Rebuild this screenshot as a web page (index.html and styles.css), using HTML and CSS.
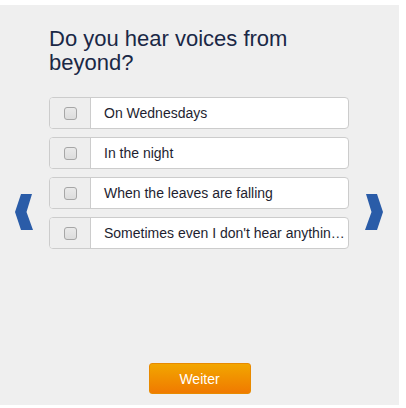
FILE: index.html
```html
<!DOCTYPE html>
<html lang="de">
<head>
<meta charset="utf-8">
<title>Survey</title>
<link rel="stylesheet" href="styles.css">
</head>
<body>
<div class="panel">
  <div class="stage">
    <button class="arrow" aria-label="Zurück">
      <svg width="18" height="36" viewBox="0 0 18 36"><polygon points="17,0 6,0 0,18 6,36 18,36 11.5,18" fill="#2a5ca8"/></svg>
    </button>
    <div class="content">
      <h3 class="question">Do you hear voices from beyond?</h3>
      <div class="option">
        <span class="addon"><span class="check"></span></span>
        <span class="label">On Wednesdays</span>
      </div>
      <div class="option">
        <span class="addon"><span class="check"></span></span>
        <span class="label">In the night</span>
      </div>
      <div class="option">
        <span class="addon"><span class="check"></span></span>
        <span class="label">When the leaves are falling</span>
      </div>
      <div class="option">
        <span class="addon"><span class="check"></span></span>
        <span class="label">Sometimes even I don't hear anything at all</span>
      </div>
    </div>
    <button class="arrow" aria-label="Weiter">
      <svg width="18" height="36" viewBox="0 0 18 36"><polygon points="1,0 12,0 18,18 12,36 0,36 6.5,18" fill="#2a5ca8"/></svg>
    </button>
  </div>
  <div class="actions">
    <button class="next">Weiter</button>
  </div>
</div>
</body>
</html>
```
FILE: styles.css
```css
html, body {
  margin: 0;
  padding: 0;
  background: #ffffff;
}
body {
  font-family: "Liberation Sans", Arial, sans-serif;
}
.panel {
  margin-top: 5px;
  width: 399px;
  height: 400px;
  background: #efefef;
  display: flex;
  flex-direction: column;
}
.stage {
  display: flex;
  gap: 16px;
  padding: 22px 0 0 15px;
}
.arrow {
  border: 0;
  padding: 0;
  background: none;
  width: 18px;
  height: 36px;
  margin-top: 167px;
  display: block;
  cursor: pointer;
}
.arrow svg {
  display: block;
}
.content {
  width: 300px;
}
.question {
  margin: 0 0 22px;
  font-size: 22px;
  line-height: 24px;
  font-weight: normal;
  color: #1a2846;
}
.option {
  display: flex;
  height: 32px;
  box-sizing: border-box;
  border: 1px solid #cccccc;
  border-radius: 4px;
  background: #ffffff;
  margin-bottom: 8px;
  overflow: hidden;
}
.addon {
  width: 40px;
  flex: none;
  background: #eeeeee;
  border-right: 1px solid #cccccc;
  display: flex;
  align-items: center;
  justify-content: center;
}
.check {
  width: 13px;
  height: 13px;
  box-sizing: border-box;
  border: 1px solid #a6a6a6;
  border-radius: 3px;
  background: linear-gradient(#e9e9e9, #dcdcdc);
}
.label {
  flex: 1;
  min-width: 0;
  padding: 0 1px 0 13px;
  font-size: 14px;
  line-height: 30px;
  color: #1e1e30;
  white-space: nowrap;
  overflow: hidden;
  text-overflow: ellipsis;
}
.actions {
  margin-top: auto;
  padding-bottom: 11px;
  display: flex;
  justify-content: center;
}
.next {
  width: 102px;
  height: 31px;
  box-sizing: border-box;
  border: 1px solid #e88a00;
  border-radius: 3px;
  background: linear-gradient(#f2a600, #f07a00);
  color: #ffffff;
  font-family: "Liberation Sans", Arial, sans-serif;
  font-size: 14px;
  padding: 0;
  cursor: pointer;
}
```
